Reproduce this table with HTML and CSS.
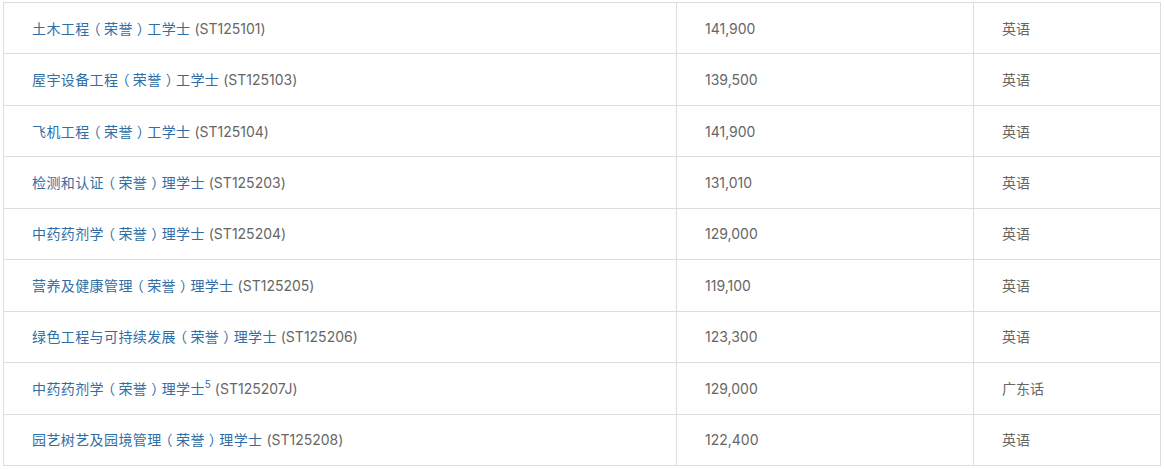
FILE: index.html
```html
<!DOCTYPE html>
<html lang="zh">
<head>
<meta charset="utf-8">
<link rel="stylesheet" href="styles.css">
</head>
<body>
<div class="wrap">
<table class="prog">
  <colgroup><col class="c1"><col class="c2"><col class="c3"></colgroup>
  <tbody>
    <tr><td><a class="lnk">土木工程<span class="po">（</span>荣誉<span class="pc">）</span>工学士</a> (ST125101)</td><td>141,900</td><td>英语</td></tr>
    <tr><td><a class="lnk">屋宇设备工程<span class="po">（</span>荣誉<span class="pc">）</span>工学士</a> (ST125103)</td><td>139,500</td><td>英语</td></tr>
    <tr><td><a class="lnk">飞机工程<span class="po">（</span>荣誉<span class="pc">）</span>工学士</a> (ST125104)</td><td>141,900</td><td>英语</td></tr>
    <tr><td><a class="lnk">检测和认证<span class="po">（</span>荣誉<span class="pc">）</span>理学士</a> (ST125203)</td><td>131,010</td><td>英语</td></tr>
    <tr><td><a class="lnk">中药药剂学<span class="po">（</span>荣誉<span class="pc">）</span>理学士</a> (ST125204)</td><td>129,000</td><td>英语</td></tr>
    <tr><td><a class="lnk">营养及健康管理<span class="po">（</span>荣誉<span class="pc">）</span>理学士</a> (ST125205)</td><td>119,100</td><td>英语</td></tr>
    <tr><td><a class="lnk">绿色工程与可持续发展<span class="po">（</span>荣誉<span class="pc">）</span>理学士</a> (ST125206)</td><td>123,300</td><td>英语</td></tr>
    <tr><td><a class="lnk">中药药剂学<span class="po">（</span>荣誉<span class="pc">）</span>理学士<sup class="note">5</sup></a> (ST125207J)</td><td>129,000</td><td>广东话</td></tr>
    <tr><td><a class="lnk">园艺树艺及园境管理<span class="po">（</span>荣誉<span class="pc">）</span>理学士</a> (ST125208)</td><td>122,400</td><td>英语</td></tr>
  </tbody>
</table>
</div>
</body>
</html>
```
FILE: styles.css
```css
html, body {
  margin: 0;
  padding: 0;
  background: #ffffff;
}
body {
  font-family: Inter, "Noto Sans CJK SC", sans-serif;
  font-size: 14px;
  color: #666666;
}
.wrap {
  padding: 2px 4px 0 3px;
}
.prog {
  border-collapse: collapse;
  width: 1157px;
  table-layout: fixed;
}
.c1 { width: 673px; }
.c2 { width: 297px; }
.c3 { width: 187px; }
.prog td {
  border: 1px solid #dddddd;
  height: 49.44px;
  padding: 1px 0 0 28px;
  vertical-align: middle;
  line-height: 20px;
  white-space: nowrap;
}
.lnk {
  color: #316ea6;
  text-decoration: none;
  letter-spacing: 0.4px;
}
.po,
.pc {
  font-feature-settings: "halt";
  margin: 0 3px 0 4px;
}
.note {
  font-size: 10px;
  line-height: 0;
  letter-spacing: 0;
  vertical-align: 6px;
}
```
